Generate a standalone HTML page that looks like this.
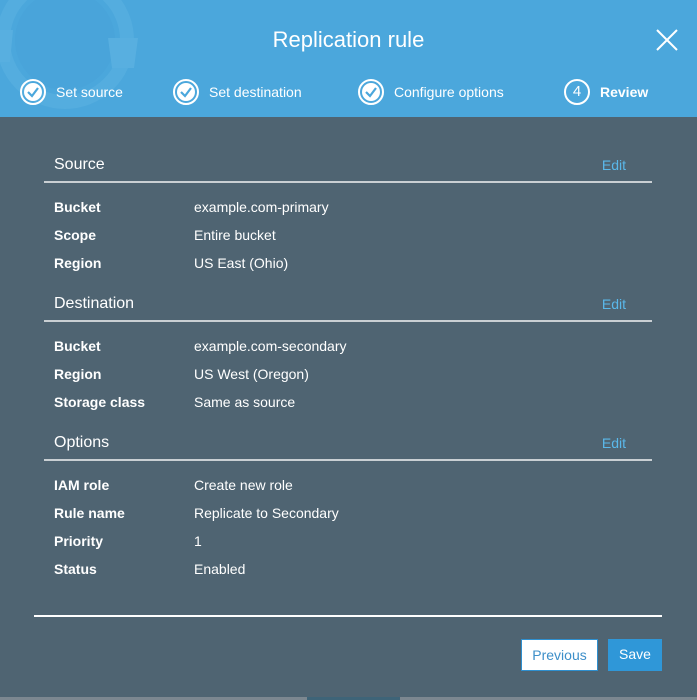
<!DOCTYPE html>
<html><head><meta charset="utf-8"><style>
*{margin:0;padding:0;box-sizing:border-box}
body{width:697px;height:700px;overflow:hidden;background:#4f6472;font-family:"Liberation Sans",Arial,sans-serif;position:relative}
.hdr{position:absolute;left:0;top:0;width:697px;height:117px;background:#4ba7dc;overflow:hidden}
.title{position:absolute;top:27px;left:0;width:697px;text-align:center;color:#fff;font-size:22px}
.step{position:absolute;top:79px;color:#fff;font-size:14px;line-height:26px;display:flex;align-items:center}
.step .c{width:26px;height:26px;border-radius:50%;border:2px solid #fff;margin-right:10px;position:relative}
.sec{position:absolute;left:44px;width:608px}
.sec h2{font-weight:normal;color:#fff;font-size:16px;padding-left:10px;height:28px;line-height:20px;border-bottom:2px solid #c9cfd3;position:relative}
.sec h2 span{position:absolute;right:26px;top:0;font-size:14px;color:#5ab8ea}
.row{display:flex;color:#fff;font-size:14px;height:28px;line-height:28px;padding-left:10px}
.row b{width:140px}
.row:first-of-type{margin-top:10px}
.btm{position:absolute;left:34px;top:615px;width:628px;height:2px;background:#fff}
.btn{position:absolute;top:639px;height:32px;line-height:30px;font-size:14px;text-align:center}
</style></head><body>
<div class="hdr">
<svg width="160" height="117" style="position:absolute;left:0;top:0">
<circle cx="65" cy="40" r="62" fill="none" stroke="#58afe0" stroke-width="14" opacity=".7"/>
<circle cx="65" cy="40" r="50" fill="#47a2d8" opacity=".6"/>
<path d="M-5 30 h18 l-3 32 h-12z" fill="#58afe0"/>
<path d="M108 38 h30 l-4 30 h-22z" fill="#58afe0"/>
</svg>
<div class="title">Replication rule</div>
<svg width="24" height="24" style="position:absolute;left:655px;top:28px"><path d="M2 2L22 22M22 2L2 22" stroke="#fff" stroke-width="2"/></svg>
<div class="step" style="left:20px"><div class="c"><svg width="22" height="22" style="position:absolute;left:0;top:0"><circle cx="11" cy="11" r="9" fill="#fff"/><path d="M6 11l4 4 6-8" stroke="#4ba7dc" stroke-width="2.2" fill="none"/></svg></div>Set source</div>
<div class="step" style="left:173px"><div class="c"><svg width="22" height="22" style="position:absolute;left:0;top:0"><circle cx="11" cy="11" r="9" fill="#fff"/><path d="M6 11l4 4 6-8" stroke="#4ba7dc" stroke-width="2.2" fill="none"/></svg></div>Set destination</div>
<div class="step" style="left:358px"><div class="c"><svg width="22" height="22" style="position:absolute;left:0;top:0"><circle cx="11" cy="11" r="9" fill="#fff"/><path d="M6 11l4 4 6-8" stroke="#4ba7dc" stroke-width="2.2" fill="none"/></svg></div>Configure options</div>
<div class="step" style="left:564px;font-weight:bold"><div class="c" style="text-align:center;line-height:22px;font-weight:normal;font-size:15px">4</div>Review</div>
</div>
<div class="sec" style="top:155px"><h2>Source<span>Edit</span></h2>
<div class="row"><b>Bucket</b>example.com-primary</div>
<div class="row"><b>Scope</b>Entire bucket</div>
<div class="row"><b>Region</b>US East (Ohio)</div></div>
<div class="sec" style="top:294px"><h2>Destination<span>Edit</span></h2>
<div class="row"><b>Bucket</b>example.com-secondary</div>
<div class="row"><b>Region</b>US West (Oregon)</div>
<div class="row"><b>Storage class</b>Same as source</div></div>
<div class="sec" style="top:433px"><h2>Options<span>Edit</span></h2>
<div class="row"><b>IAM role</b>Create new role</div>
<div class="row"><b>Rule name</b>Replicate to Secondary</div>
<div class="row"><b>Priority</b>1</div>
<div class="row"><b>Status</b>Enabled</div></div>
<div class="btm"></div>
<div class="btn" style="left:521px;width:77px;background:#fff;border:1px solid #2e8fcf;color:#3d8fc9">Previous</div>
<div class="btn" style="left:608px;width:54px;background:#2f97d8;color:#fff">Save</div>
<div style="position:absolute;left:0;top:697px;width:697px;height:3px;background:#7c8790"></div>
<div style="position:absolute;left:307px;top:697px;width:93px;height:3px;background:#3e6478"></div>
</body></html>
